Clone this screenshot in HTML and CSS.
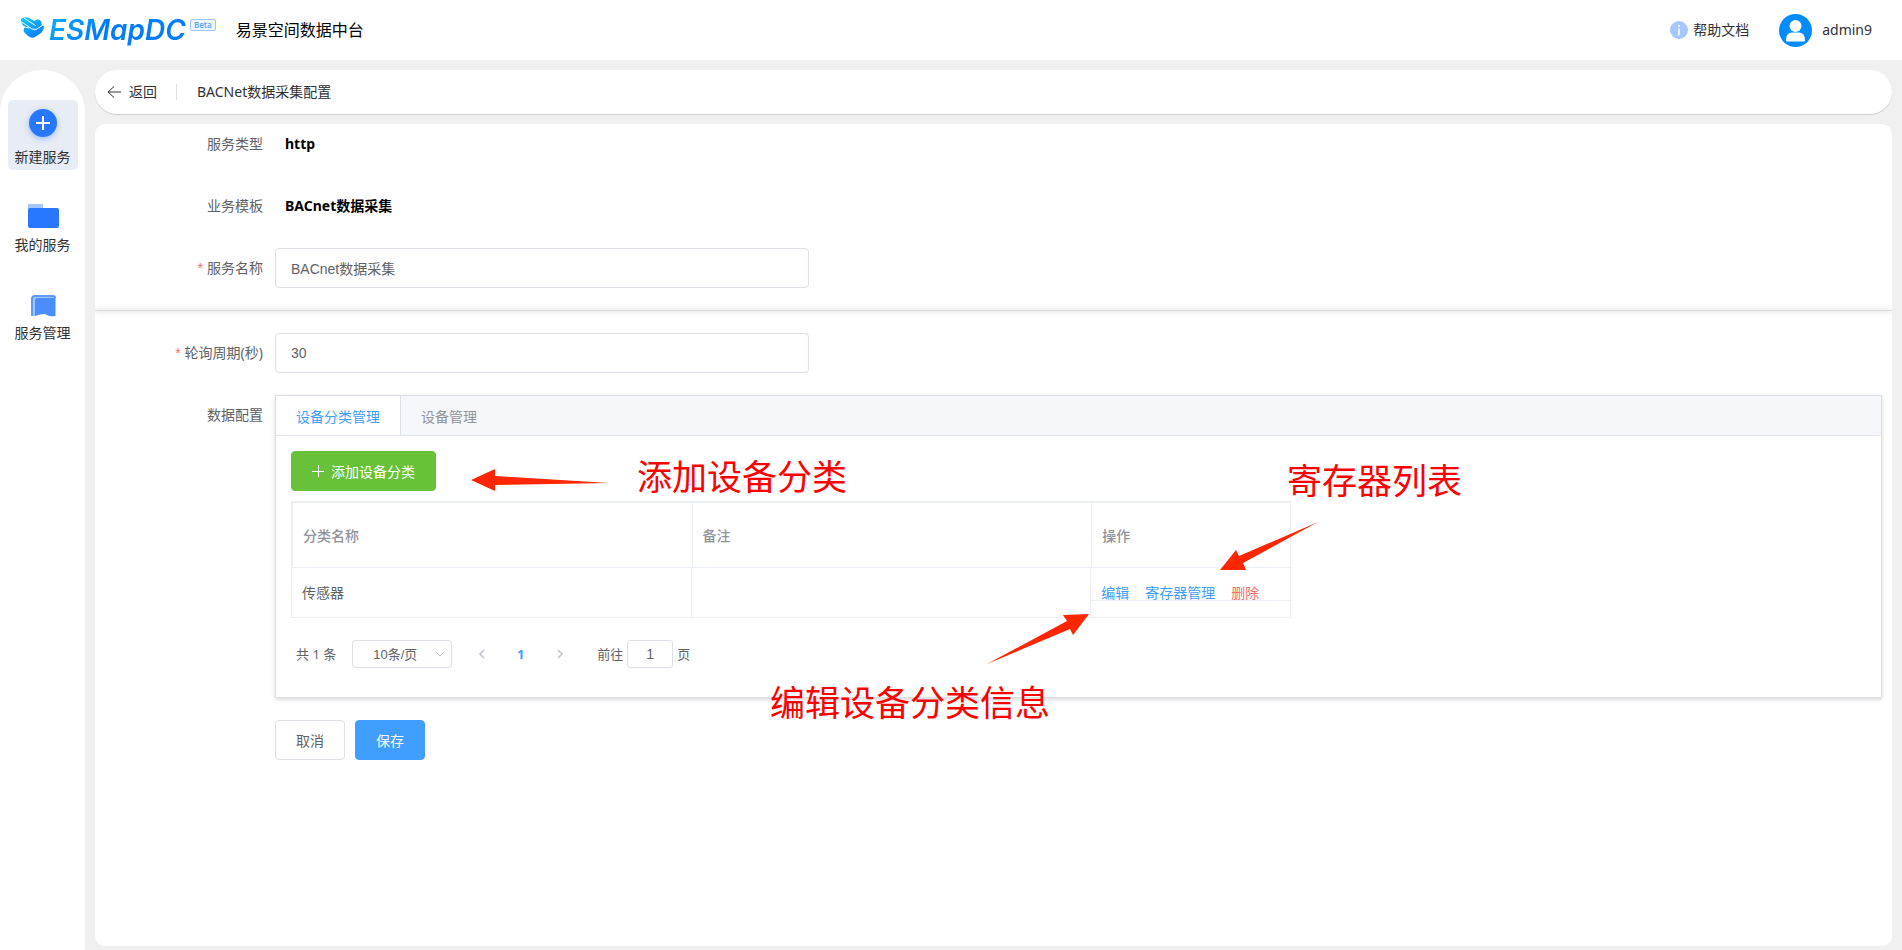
FILE: index.html
```html
<!DOCTYPE html>
<html lang="zh-CN">
<head>
    <meta charset="UTF-8">
    <meta name="viewport" content="width=device-width, initial-scale=1.0">
    <title>易景空间数据中台</title>
    <link rel="stylesheet" href="styles.css">
</head>
<body>
    <div class="app">
        <header class="header">
            <a class="logo" href="#">
                <svg class="logo-mark" width="26" height="22" viewBox="0 0 26 22">
                    <defs>
                        <linearGradient id="mark" x1="0" y1="0" x2="0.6" y2="1">
                            <stop offset="0" stop-color="#10d0f8"/>
                            <stop offset="1" stop-color="#0a7cff"/>
                        </linearGradient>
                    </defs>
                    <path fill="url(#mark)" d="M1 2Q5-1 9 1L14 4Q18 1 21 4L22 8L24 9Q24 13 21 16L15 20Q12 22 8 19L4 15Q3 12 5 10Q0 7 1 2Z"/>
                    <path fill="none" stroke="#fff" stroke-width="1" d="M0 4L12 12Q16 14 20 10L24 7M4 1L16 9M4 10L9 11"/>
                </svg>
                <span class="logo-text">ESMapDC</span>
                <span class="logo-beta">Beta</span>
            </a>
            <h1 class="header-title">易景空间数据中台</h1>
            <div class="header-right">
                <a class="help" href="#">
                    <svg width="18" height="18" viewBox="0 0 18 18">
                        <circle cx="9" cy="9" r="9" fill="#a6c8ff"/>
                        <path stroke="#fff" stroke-width="1.4" d="M9 4v2M9 7.500v7"/>
                    </svg>
                    帮助文档
                </a>
                <a class="user" href="#">
                    <svg width="33" height="33" viewBox="0 0 33 33">
                        <circle cx="16.500" cy="16.500" r="16.500" fill="#008cff"/>
                        <circle cx="16.500" cy="12" r="6" fill="#fff"/>
                        <path fill="#fff" d="M7 26.500Q7 18.500 13 18.500H20Q26 18.500 26 26.500Q26 27.500 25 27.500H8Q7 27.500 7 26.500Z"/>
                    </svg>
                    admin9
                </a>
            </div>
        </header>

        <div class="body">
            <nav class="sidebar">
                <a class="nav-item active" href="#">
                    <svg width="34" height="34" viewBox="0 0 34 34">
                        <circle class="nav-circle" cx="17" cy="14" r="14" fill="#2878ff"/>
                        <path stroke="#fff" stroke-width="2" d="M10 14H24M17 7V21"/>
                    </svg>
                    <span>新建服务</span>
                </a>
                <a class="nav-item" href="#">
                    <svg width="34" height="34" viewBox="0 0 34 34">
                        <path fill="#a3c6ff" d="M2 13V8Q2 7 3 7H16Q17 7 17 8V13Z"/>
                        <rect x="2" y="11" width="31" height="20" rx="2" fill="#2878ff"/>
                    </svg>
                    <span>我的服务</span>
                </a>
                <a class="nav-item" href="#">
                    <svg width="34" height="34" viewBox="0 0 34 34">
                        <path fill="#a3c6ff" d="M5 31V14Q5 10 9 10H27Q30 10 30 13V31L26 31V14H9V31Z"/>
                        <path fill="none" stroke="#4a8dff" stroke-width="1.500" d="M6 31V14Q6 11 9 11H27Q29 11 29 13"/>
                        <path fill="#4a8dff" d="M9 31V15Q9 13 11 13H29V31Q23 32 19 29Q14 29 9 31Z"/>
                    </svg>
                    <span>服务管理</span>
                </a>
            </nav>

            <main class="main">
                <div class="back-bar">
                    <a class="back" href="#">
                        <svg width="14" height="14" viewBox="0 0 14 14">
                            <path fill="none" stroke="#303133" d="M7 1.500L1 7L7 12.500M1 7H14"/>
                        </svg>
                        返回
                    </a>
                    <h2 class="page-title">BACNet数据采集配置</h2>
                </div>

                <form class="card">
                    <div class="form-section basic">
                        <div class="form-item">
                            <span class="form-label">服务类型</span>
                            <div class="form-content"><b class="form-value">http</b></div>
                        </div>
                        <div class="form-item">
                            <span class="form-label">业务模板</span>
                            <div class="form-content"><b class="form-value">BACnet数据采集</b></div>
                        </div>
                        <div class="form-item">
                            <label class="form-label required" for="name">服务名称</label>
                            <div class="form-content"><input class="input" id="name" type="text" value="BACnet数据采集"></div>
                        </div>
                    </div>

                    <hr class="divider">

                    <div class="form-section">
                        <div class="form-item">
                            <label class="form-label required" for="period">轮询周期(秒)</label>
                            <div class="form-content"><input class="input" id="period" type="text" value="30"></div>
                        </div>
                        <div class="form-item">
                            <span class="form-label">数据配置</span>
                            <div class="form-content">
                                <div class="tabs">
                                    <div class="tabs-header" role="tablist">
                                        <button class="tab active" type="button" role="tab" aria-selected="true">设备分类管理</button>
                                        <button class="tab" type="button" role="tab" aria-selected="false">设备管理</button>
                                    </div>
                                    <div class="tabs-content">
                                        <button class="btn btn-success" type="button">
                                            <svg width="12" height="12" viewBox="0 0 12 12">
                                                <path stroke="#fff" d="M0 6.500H12M6.500 0V12"/>
                                            </svg>
                                            添加设备分类
                                        </button>
                                        <table class="table">
                                            <thead>
                                                <tr>
                                                    <th class="col-name">分类名称</th>
                                                    <th class="col-name">备注</th>
                                                    <th class="col-action">操作</th>
                                                </tr>
                                            </thead>
                                            <tbody>
                                                <tr>
                                                    <td>传感器</td>
                                                    <td></td>
                                                    <td class="action-cell">
                                                        <div class="actions">
                                                            <a class="link" href="#">编辑</a>
                                                            <a class="link" href="#">寄存器管理</a>
                                                            <a class="link danger" href="#">删除</a>
                                                        </div>
                                                    </td>
                                                </tr>
                                            </tbody>
                                        </table>
                                        <div class="pagination">
                                            <span>共 1 条</span>
                                            <div class="page-size">
                                                <select aria-label="每页条数">
                                                    <option>10条/页</option>
                                                </select>
                                                <svg class="page-size-arrow" width="10" height="6" viewBox="0 0 10 6">
                                                    <path fill="none" stroke="#c0c4cc" d="M1 1L5 5L9 1"/>
                                                </svg>
                                            </div>
                                            <div class="pager">
                                                <button class="pager-btn" type="button" aria-label="上一页">
                                                    <svg width="8" height="10" viewBox="0 0 8 10">
                                                        <path fill="none" stroke="#c0c4cc" stroke-width="1.600" d="M6 1L2 5L6 9"/>
                                                    </svg>
                                                </button>
                                                <button class="pager-btn current" type="button">1</button>
                                                <button class="pager-btn" type="button" aria-label="下一页">
                                                    <svg width="8" height="10" viewBox="0 0 8 10">
                                                        <path fill="none" stroke="#c0c4cc" stroke-width="1.600" d="M2 1L6 5L2 9"/>
                                                    </svg>
                                                </button>
                                            </div>
                                            <label class="jump">前往<input class="jump-input" type="text" value="1">页</label>
                                        </div>
                                    </div>
                                </div>
                            </div>
                        </div>
                        <div class="form-item">
                            <span class="form-label"></span>
                            <div class="form-content form-buttons">
                                <button class="btn" type="button">取消</button>
                                <button class="btn btn-primary" type="button">保存</button>
                            </div>
                        </div>
                    </div>
                </form>
            </main>
        </div>

        <!-- guide notes over the page -->
        <svg class="notes">
            <path d="M471 480L495 469V476L609 483L495 485V491Z"/>
            <path d="M1220 570L1236 550L1239 556L1318 522L1243 563L1246 570Z"/>
            <path d="M1089 614L1063 615L1067 621L987 664L1070 629L1073 635Z"/>
            <text x="637" y="490">添加设备分类</text>
            <text x="1287" y="494">寄存器列表</text>
            <text x="770" y="716">编辑设备分类信息</text>
        </svg>
    </div>
</body>
</html>
```
FILE: styles.css
```css
* {
    box-sizing: border-box;
}

body {
    margin: 0;
    background-color: #f0f0f0;
    color: #303133;
    font-family: "Noto Sans", "Noto Sans CJK SC", sans-serif;
    font-size: 14px;
    line-height: 20px;
}

a {
    color: inherit;
    text-decoration: none;
}

svg {
    display: block;
    flex-shrink: 0;
}

button,
input,
select {
    margin: 0;
    font-family: inherit;
    font-size: 14px;
}

.app {
    position: relative;
    display: flex;
    flex-direction: column;
    min-height: 100vh;
}

.header {
    display: flex;
    align-items: center;
    height: 60px;
    padding: 0 30px 0 20px;
    background-color: #fff;
}

.logo {
    display: flex;
    align-items: center;
    height: 36px;
}

.logo-mark {
    margin-bottom: 4px;
}

.logo-text {
    margin-left: 3px;
    padding-right: 4px;
    font-family: Inter, sans-serif;
    font-size: 28px;
    font-style: italic;
    font-weight: 600;
    line-height: 36px;
    color: transparent;
    background: linear-gradient(135deg, #10b4ff, #007cff 40%);
    -webkit-background-clip: text;
    background-clip: text;
}

.logo-beta {
    align-self: flex-start;
    margin-top: 7px;
    padding: 0 3px;
    border: 1px solid #9cc8ff;
    border-radius: 2px;
    background-color: #eef6ff;
    color: #5ca6ff;
    font-size: 8px;
    font-weight: 600;
    line-height: 10px;
}

.header-title {
    margin: 0 0 0 20px;
    color: #000;
    font-size: 16px;
    font-weight: 400;
}

.header-right {
    display: flex;
    align-items: center;
    gap: 30px;
    margin-left: auto;
}

.help {
    display: flex;
    align-items: center;
    gap: 5px;
}

.user {
    display: flex;
    align-items: center;
    gap: 10px;
}

.body {
    display: flex;
    flex: 1;
    gap: 10px;
    padding: 10px 10px 0 0;
}

.sidebar {
    display: flex;
    flex-direction: column;
    align-items: center;
    gap: 18px;
    width: 85px;
    padding-top: 30px;
    border-radius: 42px 42px 0 0;
    background-color: #fff;
}

.nav-item {
    display: flex;
    flex-direction: column;
    align-items: center;
    gap: 4px;
    width: 70px;
    height: 70px;
    padding-top: 9px;
    border-radius: 5px;
}

.nav-item svg {
    overflow: visible;
}

.nav-item.active {
    background-color: #e8ecf4;
}

.nav-circle {
    filter: drop-shadow(0 2px 3px rgba(40, 120, 255, 0.4));
}

.main {
    display: flex;
    flex: 1;
    flex-direction: column;
    gap: 10px;
    min-width: 0;
    padding-bottom: 4px;
}

.back-bar {
    display: flex;
    align-items: center;
    height: 44px;
    padding-left: 12px;
    border-radius: 22px;
    background-color: #fff;
    box-shadow: 0 1px 1px rgba(0, 0, 0, 0.15);
}

.back {
    display: flex;
    align-items: center;
    gap: 8px;
}

.page-title {
    margin: 0 0 0 19px;
    padding-left: 20px;
    border-left: 1px solid #dcdfe6;
    font-size: 14px;
    font-weight: 400;
    line-height: 16px;
}

.card {
    flex: 1;
    overflow: hidden;
    border-radius: 10px;
    background-color: #fff;
    color: #606266;
}

.form-section {
    display: flex;
    flex-direction: column;
    gap: 22px;
    padding: 22px 10px 22px 0;
}

.form-section.basic {
    padding-top: 0;
}

.divider {
    height: 1px;
    margin: 0;
    border: 0;
    background-color: #dcdcdc;
    box-shadow: 0 0 5px rgba(0, 0, 0, 0.4);
}

.form-item {
    display: flex;
}

.form-label {
    flex-shrink: 0;
    width: 180px;
    padding-right: 12px;
    line-height: 40px;
    text-align: right;
}

.required::before {
    content: "*";
    margin-right: 4px;
    color: #f56c6c;
    font-family: "Liberation Sans", sans-serif;
}

.form-content {
    flex: 1;
    min-width: 0;
}

.form-value {
    padding-left: 10px;
    color: #000;
    line-height: 40px;
}

.input {
    display: block;
    width: 100%;
    max-width: 534px;
    height: 40px;
    padding: 0 15px;
    border: 1px solid #dcdfe6;
    border-radius: 4px;
    background-color: #fff;
    color: #606266;
    font-family: "Liberation Sans", "Noto Sans CJK SC", sans-serif;
}

.tabs {
    border: 1px solid #dcdfe6;
    background-color: #fff;
    box-shadow: 0 2px 4px rgba(0, 0, 0, 0.12), 0 0 6px rgba(0, 0, 0, 0.04);
}

.tabs-header {
    display: flex;
    height: 40px;
    border-bottom: 1px solid #e4e7ed;
    background-color: #f5f7fa;
}

.tab {
    padding: 0 20px;
    border: 0;
    border-right: 1px solid transparent;
    background-color: transparent;
    color: #909399;
}

.tab.active {
    border-right-color: #dcdfe6;
    background-color: #fff;
    color: #409eff;
}

.tabs-content {
    padding: 15px;
}

.btn {
    display: inline-flex;
    align-items: center;
    justify-content: center;
    gap: 7px;
    height: 40px;
    padding: 0 20px;
    border: 1px solid #dcdfe6;
    border-radius: 4px;
    background-color: #fff;
    color: #606266;
}

.btn-success {
    border-color: #67c23a;
    background-color: #67c23a;
    color: #fff;
}

.btn-primary {
    border-color: #409eff;
    background-color: #409eff;
    color: #fff;
}

.table {
    width: 100%;
    max-width: 1000px;
    margin-top: 10px;
    border: 1px solid #ebeef5;
    border-width: 1px 0 0 1px;
    border-collapse: separate;
    border-spacing: 0;
    table-layout: fixed;
}

.col-name {
    width: 40%;
}

.col-action {
    width: 20%;
}

.table th,
.table td {
    padding: 0 10px;
    border: 1px solid #ebeef5;
    border-width: 0 1px 1px 0;
    text-align: left;
}

.table th {
    height: 66px;
    padding-top: 2px;
    border-width: 1px 0 1px 1px;
    color: #909399;
    font-weight: 500;
}

.table th:last-child {
    border-right-width: 1px;
}

.table td {
    height: 50px;
}

.table .action-cell {
    padding: 0;
    vertical-align: top;
}

.actions {
    display: flex;
    align-items: flex-end;
    gap: 16px;
    height: 33px;
    padding: 0 10px;
    border-bottom: 1px solid #ebeef5;
    line-height: 14px;
}

.link {
    color: #409eff;
}

.danger {
    color: #f56c6c;
}

.pagination {
    display: flex;
    align-items: center;
    margin: 22px 0 14px;
    padding-left: 5px;
    font-size: 13px;
    line-height: 28px;
}

.page-size {
    position: relative;
    margin-left: 16px;
}

.page-size select {
    display: block;
    width: 100px;
    height: 28px;
    padding: 0 25px 0 20px;
    border: 1px solid #dcdfe6;
    border-radius: 3px;
    appearance: none;
    background-color: #fff;
    color: #606266;
    font-family: "Liberation Sans", "Noto Sans CJK SC", sans-serif;
    font-size: 13px;
}

.page-size-arrow {
    position: absolute;
    top: 11px;
    right: 7px;
}

.pager {
    display: flex;
    margin-left: 10px;
}

.pager-btn {
    display: flex;
    align-items: center;
    justify-content: center;
    width: 39px;
    height: 28px;
    padding: 0;
    border: 0;
    background-color: transparent;
    font-size: 13px;
}

.pager-btn.current {
    color: #409eff;
    font-weight: 700;
}

.jump {
    display: flex;
    align-items: center;
    gap: 4px;
    margin-left: 18px;
}

.jump-input {
    width: 46px;
    height: 28px;
    padding: 0 3px;
    border: 1px solid #dcdfe6;
    border-radius: 3px;
    background-color: #fff;
    color: #606266;
    font-family: "Liberation Sans", sans-serif;
    text-align: center;
}

.form-buttons {
    display: flex;
    gap: 10px;
}

.notes {
    position: absolute;
    top: 0;
    left: 0;
    width: 100%;
    height: 100%;
    fill: #ff2600;
    pointer-events: none;
}

.notes text {
    fill: #f00;
    font-size: 35px;
}
```
